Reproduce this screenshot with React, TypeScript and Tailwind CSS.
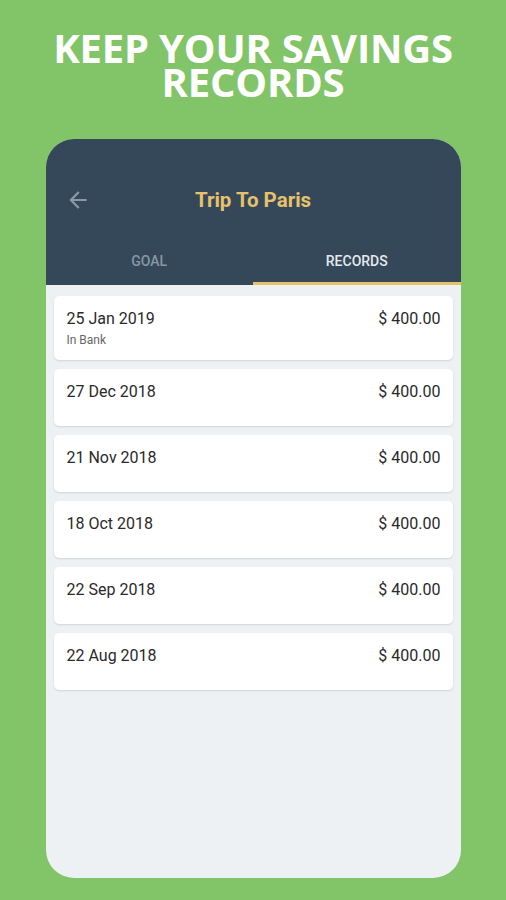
const RECORDS = [
  { date: '25 Jan 2019', note: 'In Bank', amount: '$ 400.00' },
  { date: '27 Dec 2018', note: null, amount: '$ 400.00' },
  { date: '21 Nov 2018', note: null, amount: '$ 400.00' },
  { date: '18 Oct 2018', note: null, amount: '$ 400.00' },
  { date: '22 Sep 2018', note: null, amount: '$ 400.00' },
  { date: '22 Aug 2018', note: null, amount: '$ 400.00' },
]

function BackArrow() {
  return (
    <svg width="26" height="26" viewBox="0 0 24 24" fill="#8a99a6">
      <path d="M20 11H7.83l5.59-5.59L12 4l-8 8 8 8 1.41-1.41L7.83 13H20v-2z" />
    </svg>
  )
}

export default function App() {
  return (
    <div className="w-[506px] h-[900px] bg-[#82c568] flex flex-col items-center overflow-hidden">
      <div className="mt-[31px] text-center text-white font-bold text-[40px] leading-[34px] tracking-[-0.2px] font-['Open_Sans',sans-serif]">
        <p>KEEP YOUR SAVINGS</p>
        <p>RECORDS</p>
      </div>

      <div className="mt-[40px] w-[415px] h-[739px] rounded-[28px] overflow-hidden bg-[#edf1f4] flex flex-col font-['Roboto',sans-serif]">
        <div className="bg-[#34485a] pt-[33px]">
          <div className="h-14 flex items-center relative">
            <div className="absolute left-[19px] top-[15px]">
              <BackArrow />
            </div>
            <p className="w-full text-center text-[20.5px] font-bold text-[#e8c26a]">Trip To Paris</p>
          </div>
          <div className="mt-[9px] h-12 flex">
            <div className="flex-1 flex items-center justify-center text-[14px] font-medium text-[#8797a4]">
              GOAL
            </div>
            <div className="flex-1 flex items-center justify-center text-[14px] font-medium text-[#e4e9ee] relative">
              RECORDS
              <div className="absolute left-0 right-0 bottom-0 h-[3px] bg-[#e8c26a]" />
            </div>
          </div>
        </div>

        <div className="px-[8px] pt-[11px] flex flex-col gap-[9px]">
          {RECORDS.map(r => (
            <div
              key={r.date}
              className={`bg-white rounded-[5px] shadow-[0_1px_2px_rgba(0,0,0,0.12)] pl-[13px] pr-[12px] pt-[13px] ${r.note ? 'pb-[11px]' : 'pb-[24px]'}`}
            >
              <div className="flex justify-between items-center h-5">
                <span className="text-[16px] text-[#2a2a2a]">{r.date}</span>
                <span className="text-[16px] text-[#2a2a2a]">{r.amount}</span>
              </div>
              {r.note && <p className="text-[12px] leading-[18px] text-[#666] mt-[2px]">{r.note}</p>}
            </div>
          ))}
        </div>
      </div>
    </div>
  )
}
